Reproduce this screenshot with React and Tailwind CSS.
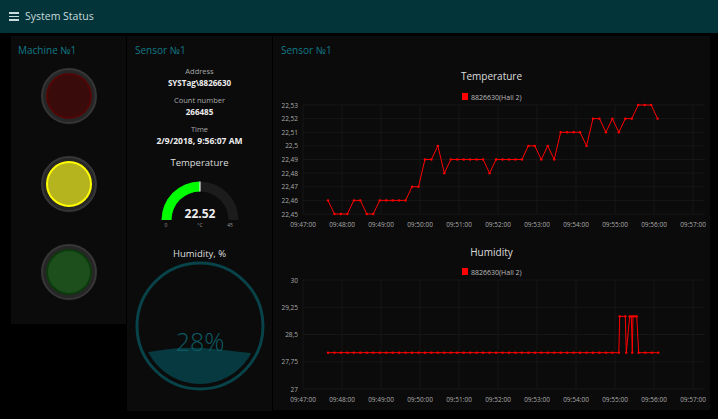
import React from "react";

const tempData = [
  22.46, 22.45, 22.45, 22.45, 22.46, 22.46, 22.45, 22.45, 22.46, 22.46, 22.46, 22.46, 22.46,
  22.47, 22.47, 22.49, 22.49, 22.5, 22.48, 22.49, 22.49, 22.49, 22.49, 22.49, 22.49, 22.48,
  22.49, 22.49, 22.49, 22.49, 22.49, 22.5, 22.5, 22.49, 22.5, 22.49, 22.51, 22.51, 22.51,
  22.51, 22.5, 22.52, 22.52, 22.51, 22.52, 22.51, 22.52, 22.52, 22.53, 22.53, 22.53, 22.52,
];

// humidity: [x in panel coords, value]
const humData = [
  ...Array.from({ length: 46 }, (_, i) => [55 + i * 6.463, 28]),
  [346.7, 29],
  [352.3, 29],
  [353.3, 28],
  [356.7, 29],
  [358.3, 29],
  [359.3, 28],
  [360, 29],
  [361.7, 29],
  [363.7, 29],
  [365.7, 28],
  [372.3, 28],
  [378.7, 28],
  [385.3, 28],
];

const minutes = ["09:47:00", "09:48:00", "09:49:00", "09:50:00", "09:51:00", "09:52:00", "09:53:00", "09:54:00", "09:55:00", "09:56:00", "09:57:00"];

const TOP = 19;
const BOTTOM = 128;
const X0 = 30;
const STEP = 39;

const LineChart = ({ ticks, min, max, points }) => {
  const y = (v) => TOP + ((max - v) / (max - min)) * (BOTTOM - TOP);
  const pts = points.map(([x, v]) => [x, y(v)]);
  return (
    <svg width="437" height="146" className="block">
      <rect x="189" y="7" width="6" height="7" fill="#ff0000" />
      <text x="198" y="13.5" fontSize="7" fill="#bbbbbb">8826630(Hall 2)</text>
      {ticks.map((t, i) => {
        const ty = TOP + (i * (BOTTOM - TOP)) / (ticks.length - 1);
        return (
          <g key={t}>
            <line x1={X0} x2="432" y1={ty} y2={ty} stroke="#161616" strokeWidth="1" />
            <text x="25" y={ty + 2.5} fontSize="6.5" fill="#aaaaaa" textAnchor="end">{t}</text>
          </g>
        );
      })}
      {minutes.map((m, i) => (
        <g key={m}>
          <line x1={X0 + i * STEP} x2={X0 + i * STEP} y1={TOP} y2={BOTTOM} stroke="#161616" strokeWidth="1" />
          <text x={X0 + i * STEP} y="140.5" fontSize="6.5" fill="#aaaaaa" textAnchor="middle">{m}</text>
        </g>
      ))}
      <polyline points={pts.map((p) => p.join(",")).join(" ")} fill="none" stroke="#ff0000" strokeWidth="1" />
      {pts.map(([px, py], i) => (
        <circle key={i} cx={px} cy={py} r="1.2" fill="#ff0000" />
      ))}
    </svg>
  );
};

const Light = ({ ring, fill }) => (
  <div className="w-[56px] h-[56px] rounded-full bg-[#262626] border-[2px] border-[#363636] p-[3px]">
    <div className={`w-full h-full rounded-full border-[2px] ${ring} ${fill}`} />
  </div>
);

const Gauge = () => {
  const cx = 42, cy = 40, ro = 38.5, ri = 28.5;
  return (
    <svg width="84" height="50" className="block">
      <path d={`M ${cx - ro} ${cy} A ${ro} ${ro} 0 0 1 ${cx + ro} ${cy} L ${cx + ri} ${cy} A ${ri} ${ri} 0 0 0 ${cx - ri} ${cy} Z`} fill="#1c1c1c" />
      <path d={`M ${cx - ro} ${cy} A ${ro} ${ro} 0 0 1 ${cx} ${cy - ro} L ${cx} ${cy - ri} A ${ri} ${ri} 0 0 0 ${cx - ri} ${cy} Z`} fill="#00ff00" />
      <line x1={cx} x2={cx} y1={cy - ro} y2={cy - ri} stroke="#ffffff" strokeWidth="1" />
      <text x={cx} y="38" fontSize="12" fontWeight="700" fill="#eeeeee" textAnchor="middle">22.52</text>
      <text x="8" y="46.5" fontSize="5" fill="#999999" textAnchor="middle">0</text>
      <text x={cx} y="46.5" fontSize="5" fill="#999999" textAnchor="middle">°C</text>
      <text x="72" y="46.5" fontSize="5" fill="#999999" textAnchor="middle">45</text>
    </svg>
  );
};

const Liquid = () => (
  <svg width="132" height="132" className="block">
    <defs>
      <clipPath id="inner">
        <circle cx="66" cy="66" r="58" />
      </clipPath>
    </defs>
    <circle cx="66" cy="66" r="63" fill="none" stroke="#08434a" strokeWidth="3" />
    <path d="M 0 95 C 30 88, 55 86, 80 89 C 100 91, 115 93, 132 95 L 132 132 L 0 132 Z" fill="#063a40" clipPath="url(#inner)" />
    <text x="66" y="91" fontSize="25" fontWeight="300" fill="#0c5c65" textAnchor="middle">28%</text>
  </svg>
);

const App = () => {
  return (
    <div className="min-h-[419px] bg-black font-['Open_Sans',sans-serif]">
      {/* Header */}
      <div className="h-[33px] bg-[#03343a] flex items-center pl-[9px]">
        <div className="flex flex-col gap-[2px] w-[10px]">
          <div className="h-[1.5px] bg-[#c8dcdc]" />
          <div className="h-[1.5px] bg-[#c8dcdc]" />
          <div className="h-[1.5px] bg-[#c8dcdc]" />
        </div>
        <span className="ml-[6px] text-[10.5px] text-[#c8dcdc]">System Status</span>
      </div>

      <div className="flex items-start gap-px pl-[11px] pt-[3px]">
        {/* Machine */}
        <div className="w-[115px] h-[288px] bg-[#0b0b0b] flex flex-col">
          <div className="pt-[6px] pl-[7px] leading-4 text-[10px] text-[#117a87]">Machine №1</div>
          <div className="flex flex-col items-center gap-[32px] mt-[10px]">
            <Light ring="border-[#520606]" fill="bg-[#3a0b0b]" />
            <Light ring="border-[#ffff00]" fill="bg-[#b6b41e]" />
            <Light ring="border-[#0c3a0c]" fill="bg-[#1d4f1d]" />
          </div>
        </div>

        {/* Sensor */}
        <div className="w-[145px] h-[375px] bg-[#0b0b0b] flex flex-col">
          <div className="pt-[6px] pl-[8px] leading-4 text-[10px] text-[#117a87]">Sensor №1</div>
          <div className="flex flex-col items-center text-center">
            <div className="mt-[8px] leading-[10px] text-[7.5px] text-[#a8a8a8]">Address</div>
            <div className="mt-[2px] leading-[10px] text-[8px] font-bold text-[#eeeeee]">SYSTag\8826630</div>
            <div className="mt-[7px] leading-[10px] text-[7.5px] text-[#a8a8a8]">Count number</div>
            <div className="mt-[2px] leading-[10px] text-[8px] font-bold text-[#eeeeee]">266485</div>
            <div className="mt-[7px] leading-[10px] text-[7.5px] text-[#a8a8a8]">Time</div>
            <div className="mt-[2px] leading-[10px] text-[8.5px] font-bold text-[#eeeeee]">2/9/2018, 9:56:07 AM</div>
            <div className="mt-[10px] leading-[14px] text-[9.5px] text-[#dddddd]">Temperature</div>
            <div className="mt-[10px]">
              <Gauge />
            </div>
            <div className="mt-[18px] leading-[12px] text-[9.5px] text-[#dddddd]">Humidity, %</div>
            <Liquid />
          </div>
        </div>

        {/* Charts */}
        <div className="w-[437px] h-[374px] bg-[#0b0b0b] flex flex-col">
          <div className="pt-[6px] pl-[8px] leading-4 text-[10px] text-[#117a87]">Sensor №1</div>
          <div className="mt-[11px] leading-[14px] text-[10px] text-[#dddddd] text-center">Temperature</div>
          <div className="mt-[3px]">
            <LineChart
              ticks={["22,53", "22,52", "22,51", "22,5", "22,49", "22,48", "22,47", "22,46", "22,45"]}
              min={22.45}
              max={22.53}
              points={tempData.map((v, i) => [55 + i * 6.463, v])}
            />
          </div>
          <div className="mt-[13px] leading-[14px] text-[10px] text-[#dddddd] text-center">Humidity</div>
          <div className="mt-[2px]">
            <LineChart ticks={["30", "29,25", "28,5", "27,75", "27"]} min={27} max={30} points={humData} />
          </div>
        </div>
      </div>
    </div>
  );
};

export default App;
